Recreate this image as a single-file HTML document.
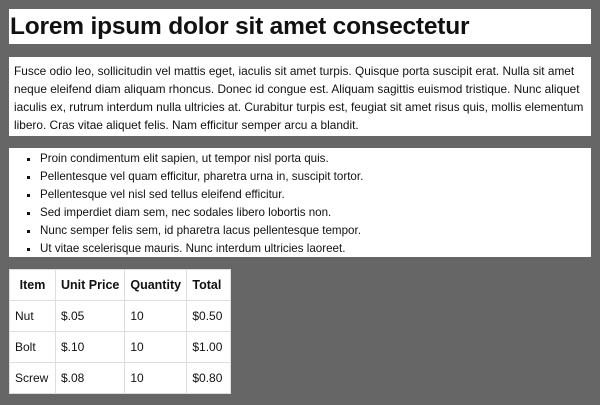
<!DOCTYPE html>
<html><head><style>
*{margin:0;padding:0;box-sizing:border-box}
body{width:600px;height:405px;background:#666;font-family:"Liberation Sans",Arial,sans-serif;color:#111;position:relative;overflow:hidden}
.b{position:absolute;left:9px;width:582px;background:#fff}
h1{font-size:24.5px;font-weight:bold;line-height:35px;padding-left:1px;letter-spacing:-0.2px}
p{font-size:11.85px;line-height:18px;padding:5px 4px 5px 5px}
ul{font-size:11.6px;line-height:18px;padding:2px 0 2px 31px;list-style:square}
table{position:absolute;left:9px;top:269px;border-collapse:collapse;background:#fff;font-size:12px;white-space:nowrap}
td,th{border:1px solid #ddd;padding:0 5px;height:31px;text-align:left}
th{font-weight:bold;font-size:12.5px}
</style></head><body>
<div class="b" style="top:9px;height:35px"><h1>Lorem ipsum dolor sit amet consectetur</h1></div>
<div class="b" style="top:57px;height:79px"><p>Fusce odio leo, sollicitudin vel mattis eget, iaculis sit amet turpis. Quisque porta suscipit erat. Nulla sit amet neque eleifend diam aliquam rhoncus. Donec id congue est. Aliquam sagittis euismod tristique. Nunc aliquet iaculis ex, rutrum interdum nulla ultricies at. Curabitur turpis est, feugiat sit amet risus quis, mollis elementum libero. Cras vitae aliquet felis. Nam efficitur semper arcu a blandit.</p></div>
<div class="b" style="top:148px;height:109px"><ul>
<li>Proin condimentum elit sapien, ut tempor nisl porta quis.</li>
<li>Pellentesque vel quam efficitur, pharetra urna in, suscipit tortor.</li>
<li>Pellentesque vel nisl sed tellus eleifend efficitur.</li>
<li>Sed imperdiet diam sem, nec sodales libero lobortis non.</li>
<li>Nunc semper felis sem, id pharetra lacus pellentesque tempor.</li>
<li>Ut vitae scelerisque mauris. Nunc interdum ultricies laoreet.</li>
</ul></div>
<table>
<tr><th style="width:46px;text-align:center">Item</th><th style="width:69px">Unit Price</th><th style="width:62px">Quantity</th><th style="width:44px">Total</th></tr>
<tr><td>Nut</td><td>$.05</td><td>10</td><td>$0.50</td></tr>
<tr><td>Bolt</td><td>$.10</td><td>10</td><td>$1.00</td></tr>
<tr><td>Screw</td><td>$.08</td><td>10</td><td>$0.80</td></tr>
</table>
</body></html>
